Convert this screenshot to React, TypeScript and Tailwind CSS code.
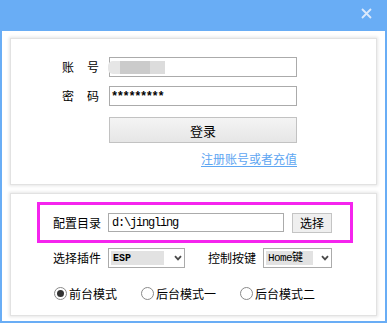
import React from 'react';

const cjk = "font-['Noto_Sans_CJK_SC','Noto_Sans',sans-serif]";
const mono = "font-['Liberation_Mono','Noto_Sans_CJK_SC',monospace]";

function Chevron() {
  return (
    <svg width="8" height="6" viewBox="0 0 8 6" className="shrink-0">
      <path d="M1 1.2 L4 4.4 L7 1.2" fill="none" stroke="#4a4a4a" strokeWidth="1.8" />
    </svg>
  );
}

function Radio({ checked, label, className = '' }: { checked?: boolean; label: string; className?: string }) {
  return (
    <div className={`flex items-center ${className}`}>
      <div className="flex h-[13px] w-[13px] items-center justify-center rounded-full border border-[#8a8a8a] bg-white">
        {checked ? <div className="h-[7px] w-[7px] rounded-full bg-[#333]" /> : null}
      </div>
      <span className="ml-[2px] text-[12px] leading-none text-black">{label}</span>
    </div>
  );
}

function Field({ label, children }: { label: [string, string]; children: React.ReactNode }) {
  return (
    <div className="flex h-[20px] items-center">
      <div className="flex w-[37px] justify-between text-[12px] leading-none text-black">
        <span>{label[0]}</span>
        <span>{label[1]}</span>
      </div>
      <div className="ml-[10px] h-[20px] w-[188px] border border-[#ababab] bg-white">{children}</div>
    </div>
  );
}

export default function App() {
  return (
    <div className={`flex h-[323px] w-[387px] flex-col bg-[#69adf5] ${cjk}`}>
      <div className="relative h-[31px] shrink-0">
        <svg width="11" height="11" viewBox="0 0 11 11" className="absolute left-[361px] top-[8px]">
          <path d="M1 1 L10 10 M10 1 L1 10" stroke="#dbe9fb" strokeWidth="1.8" />
        </svg>
      </div>

      <div className="mx-[2px] mb-[2px] flex-1 bg-white px-[8px] pt-[7px]">
        {/* login panel */}
        <div className="h-[147px] border border-[#e2e2e2] pl-[51px] pt-[18px] shadow-[0_0_3px_1px_rgba(0,0,0,0.10)]">
          <Field label={['账', '号']}>
            <div className="mt-[3px] flex h-[13px] -ml-[2px]">
              <div className="w-[12px] rounded-l-[5px] bg-[#e6e6e6]" />
              <div className="w-[30px] bg-[#cbcbcb]" />
              <div className="w-[15px] bg-[#dcdcdc]" />
            </div>
          </Field>
          <div className="mt-[9px]">
            <Field label={['密', '码']}>
              <div className={`pl-[1px] pt-[2px] text-[12px] font-bold leading-[16px] tracking-[-1.4px] text-black ${mono}`}>*********</div>
            </Field>
          </div>
          <button className="ml-[47px] mt-[11px] flex h-[26px] w-[188px] items-center justify-center border border-[#c2c2c2] bg-gradient-to-b from-[#f4f4f4] to-[#e6e6e6] text-[13px] leading-none text-black">
            登录
          </button>
          <div className="mt-[9px] flex w-[235px] justify-end">
            <span className="text-[12px] leading-[14px] text-[#5ea6f2] underline underline-offset-2">注册账号或者充值</span>
          </div>
        </div>

        {/* settings panel */}
        <div className="mt-[8px] h-[123px] border border-[#e2e2e2] pt-[8px] shadow-[0_0_3px_1px_rgba(0,0,0,0.10)]">
          <div className="ml-[26px] flex h-[41px] w-[316px] items-center border-[3px] border-[#f524ee] pl-[13px]">
            <span className="w-[48px] text-[12px] leading-none text-black">配置目录</span>
            <div className={`ml-[7px] flex h-[19px] w-[176px] items-center border border-[#ababab] pl-[3px] text-[12px] tracking-[-1.2px] text-black ${mono}`}>
              d:\jingling
            </div>
            <button className="ml-[8px] flex h-[20px] w-[40px] items-center justify-center border border-[#c4c4c4] bg-[#efefef] text-[12px] leading-none text-black">
              选择
            </button>
          </div>

          <div className="ml-[42px] mt-[5px] flex h-[20px] items-center">
            <span className="w-[48px] text-[12px] leading-none text-black">选择插件</span>
            <div className="ml-[7px] flex h-[20px] w-[77px] items-center border border-[#ababab] p-[2px]">
              <div className={`flex h-full w-[55px] items-center bg-[#e2e2e2] pl-[2px] text-[10px] font-bold text-black ${mono}`}>ESP</div>
              <div className="ml-[10px]"><Chevron /></div>
            </div>
            <span className="ml-[23px] w-[48px] text-[12px] leading-none text-black">控制按键</span>
            <div className="ml-[7px] flex h-[20px] w-[69px] items-center border border-[#ababab] p-[2px]">
              <div className={`flex h-full w-[47px] items-center bg-[#e2e2e2] pl-[2px] text-[11px] tracking-[-0.6px] text-black ${mono}`}>Home键</div>
              <div className="ml-[8px]"><Chevron /></div>
            </div>
          </div>

          <div className="ml-[43px] mt-[19px] flex items-center">
            <Radio checked label="前台模式" />
            <Radio label="后台模式一" className="ml-[24px]" />
            <Radio label="后台模式二" className="ml-[24px]" />
          </div>
        </div>
      </div>
    </div>
  );
}
